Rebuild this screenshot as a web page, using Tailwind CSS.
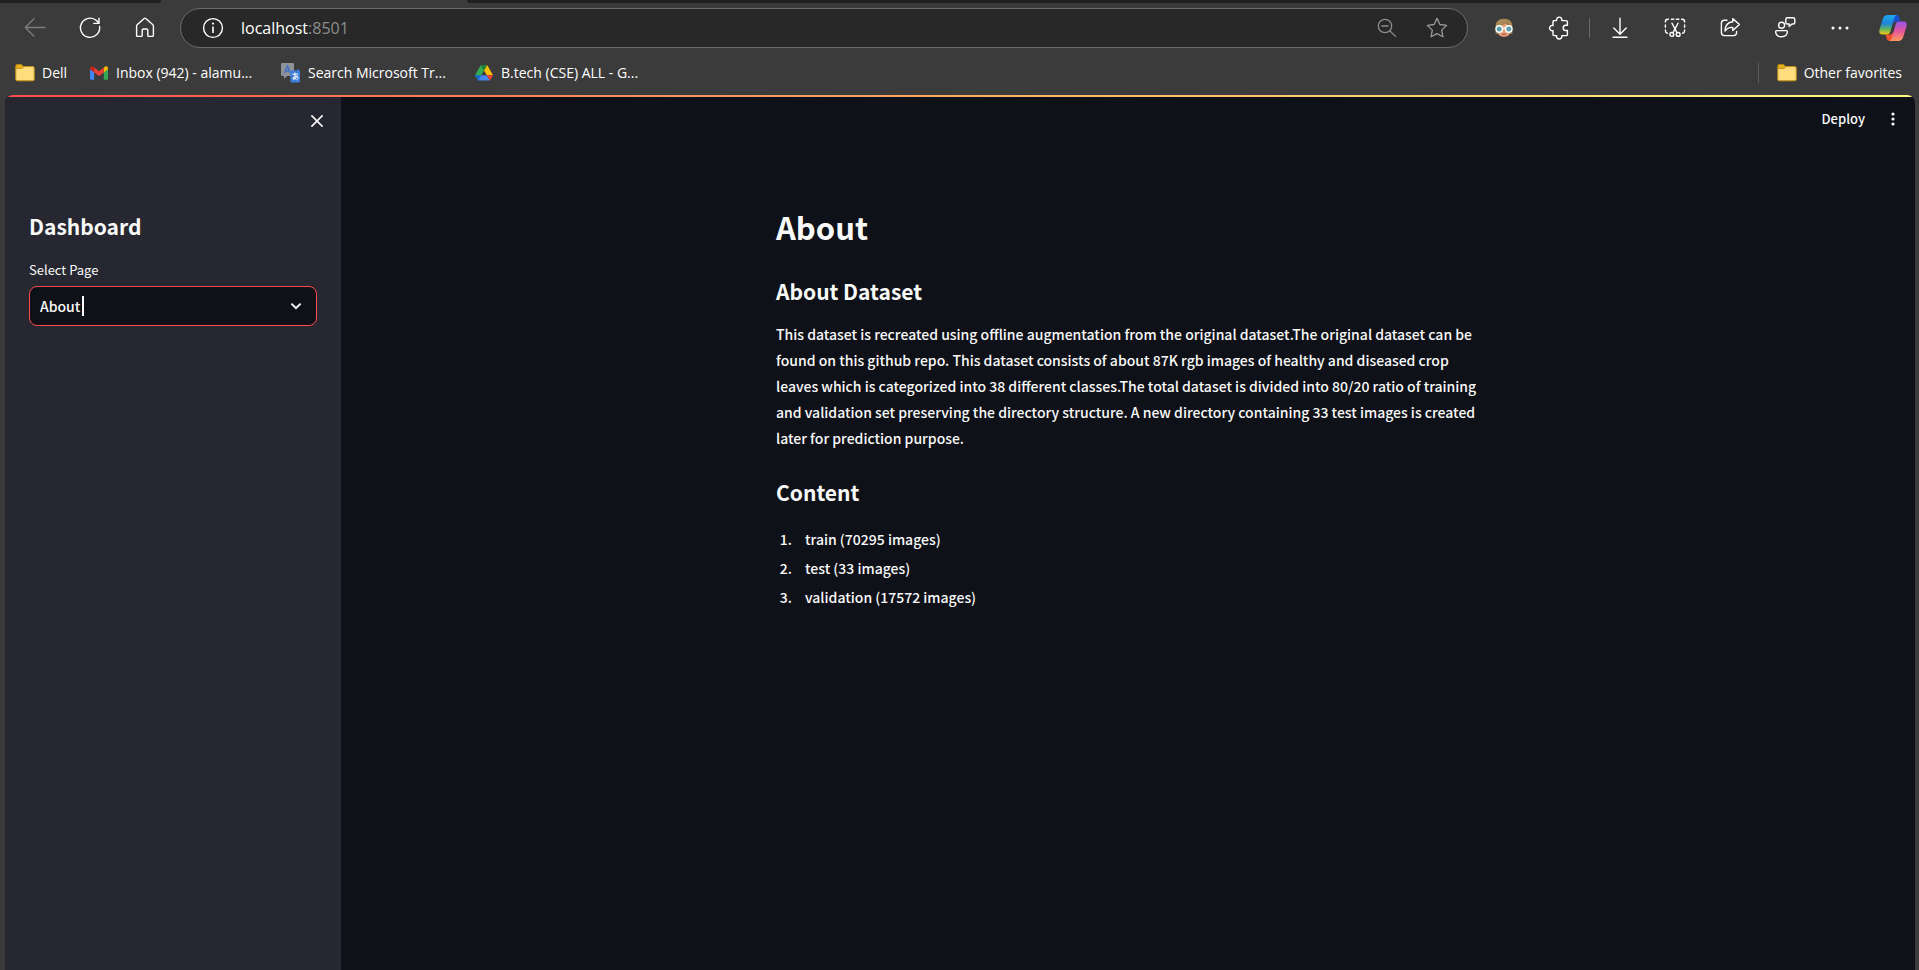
<!DOCTYPE html>
<html lang="en">

<head>
  <meta charset="UTF-8">
  <meta name="viewport" content="width=device-width, initial-scale=1.0">
  <title>Dashboard – About</title>
  <script src="https://cdn.jsdelivr.net/npm/@tailwindcss/browser@4"></script>
</head>

<body class="min-h-screen flex flex-col bg-[#3b3b3b] text-white font-['Open_Sans',sans-serif]">

  <!-- bottom edge of the tab strip -->
  <div class="flex h-[3px]">
    <div class="w-[161px] bg-[#202020] rounded-br-lg"></div>
    <div class="w-[306px]"></div>
    <div class="flex-1 bg-[#202020] rounded-bl-lg"></div>
  </div>

  <!-- toolbar -->
  <header class="flex items-center h-[50px] pl-[7px]">
    <nav class="flex">
      <button class="w-[55px] flex justify-center text-[#7c7c7c]" aria-label="Back">
        <svg class="size-6" viewBox="0 0 24 24" fill="none" stroke="currentColor" stroke-width="1.3" stroke-linecap="round" stroke-linejoin="round"><path d="M22 11.5H2.5M11 2.8L2.3 11.5L11 20.2"/></svg>
      </button>
      <button class="w-[55px] flex justify-center" aria-label="Refresh">
        <svg class="size-6" viewBox="0 0 24 24" fill="none" stroke="currentColor" stroke-width="1.4" stroke-linecap="round" stroke-linejoin="round"><path d="M21.6 10.5A9.6 9.6 0 1 1 18.5 4.6L21 7.2M21 2.2V7.4H15.8"/></svg>
      </button>
      <button class="w-[55px] flex justify-center" aria-label="Home">
        <svg class="size-6" viewBox="0 0 24 24" fill="none" stroke="currentColor" stroke-width="1.4" stroke-linejoin="round"><path d="M3.6 9.8Q3.6 9.2 4.1 8.8L11.2 2.5Q12 1.8 12.8 2.5L19.9 8.8Q20.4 9.2 20.4 9.8V19.4Q20.4 20.4 19.4 20.4H15.8Q14.8 20.4 14.8 19.4V14.2Q14.8 13 13.6 13H10.4Q9.2 13 9.2 14.2V19.4Q9.2 20.4 8.2 20.4H4.6Q3.6 20.4 3.6 19.4Z"/></svg>
      </button>
    </nav>

    <div class="flex-1 flex items-center h-10 mx-2 pl-5 pr-[18px] rounded-full border border-[#6b6b6b] bg-[#282828]">
      <button aria-label="View site information">
        <svg class="size-6" viewBox="0 0 24 24" fill="none" stroke="currentColor" stroke-width="1.4"><circle cx="12" cy="12" r="9.4"/><path d="M12 10.5V17" stroke-width="1.6"/><circle cx="12" cy="7.6" r="1.1" fill="currentColor" stroke="none"/></svg>
      </button>
      <div class="flex-1 pl-4 text-base" role="textbox" aria-label="Address">localhost<span class="text-[#8c8c8c]">:8501</span></div>
      <button class="text-[#8c8c8c]" aria-label="Zoom out">
        <svg class="size-6" viewBox="0 0 24 24" fill="none" stroke="currentColor" stroke-width="1.3" stroke-linecap="round"><circle cx="10" cy="10" r="6.7"/><path d="M15 15L20.6 20.4M6.8 10H13.2"/></svg>
      </button>
      <button class="ml-[26px] text-[#9a9a9a]" aria-label="Add to favorites">
        <svg class="size-6" viewBox="0 0 24 24" fill="none" stroke="currentColor" stroke-width="1.3" stroke-linejoin="round"><path d="M12 2.4L14.9 8.5L21.6 9.4L16.7 14.1L17.9 20.8L12 17.6L6.1 20.8L7.3 14.1L2.4 9.4L9.1 8.5Z"/></svg>
      </button>
    </div>

    <nav class="flex items-center">
      <button class="w-[55px] flex justify-center" aria-label="Avatar extension">
        <svg class="size-5" viewBox="0 0 20 20">
          <path d="M1.6 9C1.6 3.8 5 .8 10 .8S18.4 3.8 18.4 9V16H15V9H5V16H1.6Z" fill="#8f7148"/>
          <path d="M3.2 8Q8 8 11 5Q13 7.2 16.8 8V12.5Q16 18.8 10 18.8T3.2 12.5Z" fill="#e8a47c"/>
          <path d="M1.6 8.4Q2 .8 10 .8T18.4 8.4Q15.4 7.4 13.4 4.8Q9 8.4 1.6 8.4Z" fill="#a98757"/>
          <circle cx="5.2" cy="11" r="3.2" fill="#5e9fae" stroke="#fff" stroke-width="1.4"/>
          <circle cx="14.8" cy="11" r="3.2" fill="#5e9fae" stroke="#fff" stroke-width="1.4"/>
          <path d="M8.4 10.4H11.6" stroke="#fff" stroke-width="1.4"/>
          <path d="M7.6 16.2H12.4" stroke="#b3513d" stroke-width="1.2"/>
        </svg>
      </button>
      <button class="w-[55px] flex justify-center" aria-label="Extensions">
        <svg class="size-6" viewBox="0 0 24 24" fill="none" stroke="currentColor" stroke-width="1.4" stroke-linejoin="round"><path d="M6.4 4.6H9.6A2.7 2.7 0 1 1 14.8 4.6H19.2Q20.4 4.6 20.4 5.8V9.3H18.8A2.6 2.6 0 0 0 18.8 14.5H20.4V18.4Q20.4 19.6 19.2 19.6H14.8A2.7 2.7 0 1 1 9.6 19.6H7.2Q6 19.6 6 18.4V14.7A2.7 2.7 0 1 1 6 9.5V5.8Q6 4.6 7.2 4.6Z"/></svg>
      </button>
      <div class="w-[6px] flex justify-center"><span class="w-px h-5 bg-[#6b6b6b]"></span></div>
      <button class="w-[55px] flex justify-center" aria-label="Downloads">
        <svg class="size-6" viewBox="0 0 24 24" fill="none" stroke="currentColor" stroke-width="1.4" stroke-linecap="round" stroke-linejoin="round"><path d="M12 2.2V18M5.8 12L12 18.2L18.2 12M5 21.3H19"/></svg>
      </button>
      <button class="w-[55px] flex justify-center" aria-label="Screenshot">
        <svg class="size-6" viewBox="0 0 24 24" fill="none" stroke="currentColor" stroke-width="1.4" stroke-linecap="round"><path d="M2.4 6V5.6Q2.4 3.2 4.8 3.2H5.4M8.4 3.2H10.8M13.4 3.2H15.8M18.6 3.2H19.2Q21.6 3.2 21.6 5.6V6M2.4 9V11.2M21.6 9V11.2M2.4 14V14.8Q2.4 16.8 4.4 17.2M21.6 14V14.8Q21.6 16.8 19.6 17.2"/><path d="M9 7.2L13.8 16.4M15 7.2L10.2 16.4"/><circle cx="8.8" cy="18.4" r="1.9"/><circle cx="15.2" cy="18.4" r="1.9"/></svg>
      </button>
      <button class="w-[55px] flex justify-center" aria-label="Share">
        <svg class="size-6" viewBox="0 0 24 24" fill="none" stroke="currentColor" stroke-width="1.4" stroke-linecap="round" stroke-linejoin="round"><path d="M9 4.2H6.4Q3.4 4.2 3.4 7.2V16.6Q3.4 19.6 6.4 19.6H15.6Q18.6 19.6 18.6 16.6V15.4"/><path d="M14.8 2.6L21.4 8.6L14.8 14.6V11.4Q9.8 11 7 15Q7.4 6.4 14.8 5.8Z"/></svg>
      </button>
      <button class="w-[55px] flex justify-center" aria-label="Send feedback">
        <svg class="size-6" viewBox="0 0 24 24" fill="none" stroke="currentColor" stroke-width="1.4" stroke-linejoin="round"><circle cx="8.6" cy="9.2" r="3"/><path d="M3.8 14.6H13.2Q14.4 14.6 14.4 15.8Q14 20.8 8.5 20.8T2.6 15.8Q2.6 14.6 3.8 14.6Z"/><path d="M14.4 1.8H20.2Q21.8 1.8 21.8 3.4V6.4Q21.8 8 20.2 8H19L16.2 10.6V8H14.4Q12.8 8 12.8 6.4V3.4Q12.8 1.8 14.4 1.8Z"/></svg>
      </button>
      <button class="w-[55px] flex justify-center" aria-label="Settings and more">
        <svg class="size-6" viewBox="0 0 24 24" fill="currentColor"><circle cx="5" cy="12" r="1.5"/><circle cx="12" cy="12" r="1.5"/><circle cx="19" cy="12" r="1.5"/></svg>
      </button>
      <button class="w-[52px] flex justify-center" aria-label="Copilot">
        <svg class="size-7" viewBox="0 0 28 28">
          <defs>
            <linearGradient id="cop-a" x1="0" y1="0" x2="0" y2="1"><stop offset="0" stop-color="#1ea7ee"/><stop offset=".45" stop-color="#1f86d8"/><stop offset=".72" stop-color="#5bb45f"/><stop offset="1" stop-color="#f2c417"/></linearGradient>
            <linearGradient id="cop-b" x1="0" y1="0" x2="0" y2="1"><stop offset="0" stop-color="#9a55ea"/><stop offset=".5" stop-color="#e5569c"/><stop offset="1" stop-color="#ff9a5c"/></linearGradient>
          </defs>
          <path d="M13 1H17.6Q19.6 1 20.2 3L21.4 7.6H17Q14.8 7.6 14 10Z" fill="#1b4ed0"/>
          <path d="M15 27H10.2Q8.4 27 7.8 25L6.6 20.4H11Q13.4 20.4 14 18Z" fill="#f0502f"/>
          <path d="M8.8 1H18Q16 1.4 15.2 4L11.4 17.4Q10.6 20.4 7.6 20.4H3.4Q-.6 20.4 .5 15.6L3.8 5Q5 1 8.8 1Z" fill="url(#cop-a)"/>
          <path d="M19.2 27H10.2Q12 26.6 12.8 24L16.6 10.6Q17.4 7.6 20.4 7.6H24.6Q28.6 7.6 27.5 12.4L24.2 23Q23 27 19.2 27Z" fill="url(#cop-b)"/>
        </svg>
      </button>
    </nav>
  </header>

  <!-- favorites bar -->
  <nav class="flex items-center h-[42px] pl-[15px] pr-[17px] pb-[2px] text-sm whitespace-nowrap">
    <a href="#" class="w-[74px] flex items-center gap-[7px]">
      <svg class="size-5" viewBox="0 0 20 20"><path d="M.8 3Q.8 1.6 2.2 1.6H6.4L8.6 3.6V6H.8Z" fill="#e8b21f" stroke="#b98a12"/><path d="M.8 5.4H7L9 3.6H17.8Q19.2 3.6 19.2 5V16.4Q19.2 17.8 17.8 17.8H2.2Q.8 17.8 .8 16.4Z" fill="#ffdc7c" stroke="#c4941a"/></svg>
      Dell
    </a>
    <a href="#" class="w-48 flex items-center gap-[7px]">
      <svg class="size-5" viewBox="0 0 20 20"><path d="M1 6V15.6Q1 16.8 2.2 16.8H5.2V9Z" fill="#4285f4"/><path d="M19 6V15.6Q19 16.8 17.8 16.8H14.8V9Z" fill="#34a853"/><path d="M14.8 5V9.4L19 6.2V5Q18.6 2.2 16 3.6Z" fill="#fbbc04"/><path d="M5.2 5V9.4L1 6.2V5Q1.4 2.2 4 3.6Z" fill="#c5221f"/><path d="M5.2 4.6L10 8.2L14.8 4.6V9.4L10 13L5.2 9.4Z" fill="#ea4335"/></svg>
      Inbox (942) - alamu...
    </a>
    <a href="#" class="w-[193px] flex items-center gap-[7px]">
      <svg class="size-5" viewBox="0 0 20 20"><path d="M1 0H12Q13 0 13 1V12Q13 13 12 13H6L3 16V13H1Q0 13 0 12V1Q0 0 1 0Z" fill="#8d9199"/><path d="M3.6 10L6.5 3L9.4 10M4.6 7.8H8.4" fill="none" stroke="#3d6fc4" stroke-width="1.4"/><path d="M10 7.4H16.6V5.4L19 8V18.4Q19 19.4 18 19.4H10.4Q9.4 19.4 9.4 18.4V8Q9.4 7.4 10 7.4Z" fill="#3f7fdc"/><path d="M11.4 11.2H17M14 9.6V16.4M16.2 12.6Q14.6 16.6 12.4 16.4Q10.8 14.6 14.4 13.4Q17.8 13.2 17 15.4Q16.6 16.4 15.4 16.8" fill="none" stroke="#fff" stroke-width="1"/></svg>
      Search Microsoft Tr...
    </a>
    <a href="#" class="flex items-center gap-[7px]">
      <svg class="size-5" viewBox="0 0 20 20"><path d="M6.8 2L10 7.6L4.2 17.6L1 12.2Z" fill="#34a853"/><path d="M6.8 2H13.2L10 7.6Z" fill="#188038"/><path d="M13.2 2L19 12.2H12.7L10 7.6Z" fill="#fbbc04"/><path d="M1 12.2H7.3L4.2 17.6Z" fill="#1967d2"/><path d="M7.3 12.2H12.7L15.8 17.6H4.2Z" fill="#4285f4"/><path d="M12.7 12.2H19L15.8 17.6Z" fill="#ea4335"/></svg>
      B.tech (CSE) ALL - G...
    </a>
    <span class="ml-auto mr-[18px] w-px h-5 bg-[#5c5c5c]"></span>
    <a href="#" class="flex items-center gap-[7px]">
      <svg class="size-5" viewBox="0 0 20 20"><path d="M.8 3Q.8 1.6 2.2 1.6H6.4L8.6 3.6V6H.8Z" fill="#e8b21f" stroke="#b98a12"/><path d="M.8 5.4H7L9 3.6H17.8Q19.2 3.6 19.2 5V16.4Q19.2 17.8 17.8 17.8H2.2Q.8 17.8 .8 16.4Z" fill="#ffdc7c" stroke="#c4941a"/></svg>
      Other favorites
    </a>
  </nav>

  <!-- app -->
  <div class="flex-1 flex flex-col ml-[5px] mr-1 rounded-t-lg overflow-hidden bg-[#0e1117] text-[#fafafa] font-['Noto_Sans_CJK_SC',sans-serif]">
    <div class="h-[2px] bg-linear-to-r from-[#ff4b4b] to-[#fffd80]"></div>
    <div class="flex-1 flex">

      <aside class="w-[336px] bg-[#262730] px-6">
        <div class="flex justify-end h-12 items-center">
          <button class="-mr-2" aria-label="Close sidebar">
            <svg class="size-4" viewBox="0 0 16 16" fill="none" stroke="currentColor" stroke-width="1.6"><path d="M2.4 2.4L13.6 13.6M13.6 2.4L2.4 13.6"/></svg>
          </button>
        </div>
        <h2 class="mt-[63px] text-[21px] leading-9 font-bold">Dashboard</h2>
        <label for="page" class="block mt-4 text-[13px] leading-5">Select Page</label>
        <div class="relative mt-[6px]">
          <select id="page" class="appearance-none w-full h-10 pl-[10px] text-sm font-medium rounded-lg border border-[#ff4b4b] bg-[#0e1117] outline-none">
            <option>Home</option>
            <option selected>About</option>
            <option>Disease Recognition</option>
          </select>
          <span class="absolute left-[53px] top-[10px] w-[2px] h-5 bg-[#fafafa]"></span>
          <svg class="absolute right-[13px] top-3 size-4 pointer-events-none" viewBox="0 0 16 16" fill="none" stroke="currentColor" stroke-width="2"><path d="M3.4 5.6L8 10.2L12.6 5.6"/></svg>
        </div>
      </aside>

      <main class="flex-1">
        <div class="flex justify-end items-center h-11 gap-5 pr-[14px]">
          <button class="text-[13px] font-medium">Deploy</button>
          <button aria-label="Menu">
            <svg class="size-4" viewBox="0 0 16 16" fill="currentColor"><circle cx="8" cy="3" r="1.6"/><circle cx="8" cy="8" r="1.6"/><circle cx="8" cy="13" r="1.6"/></svg>
          </button>
        </div>
        <article class="max-w-[704px] mx-auto text-sm font-medium">
          <h1 class="mt-[58px] text-[31px] leading-[56px] font-bold">About</h1>
          <h3 class="mt-[18px] text-[21px] leading-9 font-bold">About Dataset</h3>
          <p class="mt-3 leading-[26px]">This dataset is recreated using offline augmentation from the original dataset.The original dataset can be found on this github repo. This dataset consists of about 87K rgb images of healthy and diseased crop leaves which is categorized into 38 different classes.The total dataset is divided into 80/20 ratio of training and validation set preserving the directory structure. A new directory containing 33 test images is created later for prediction purpose.</p>
          <h3 class="mt-[23px] text-[21px] leading-9 font-bold">Content</h3>
          <ol class="mt-4 pl-[19px] list-decimal leading-[26px] space-y-[3px]">
            <li class="pl-[10px]">train (70295 images)</li>
            <li class="pl-[10px]">test (33 images)</li>
            <li class="pl-[10px]">validation (17572 images)</li>
          </ol>
        </article>
      </main>
    </div>
  </div>
</body>
</html>
